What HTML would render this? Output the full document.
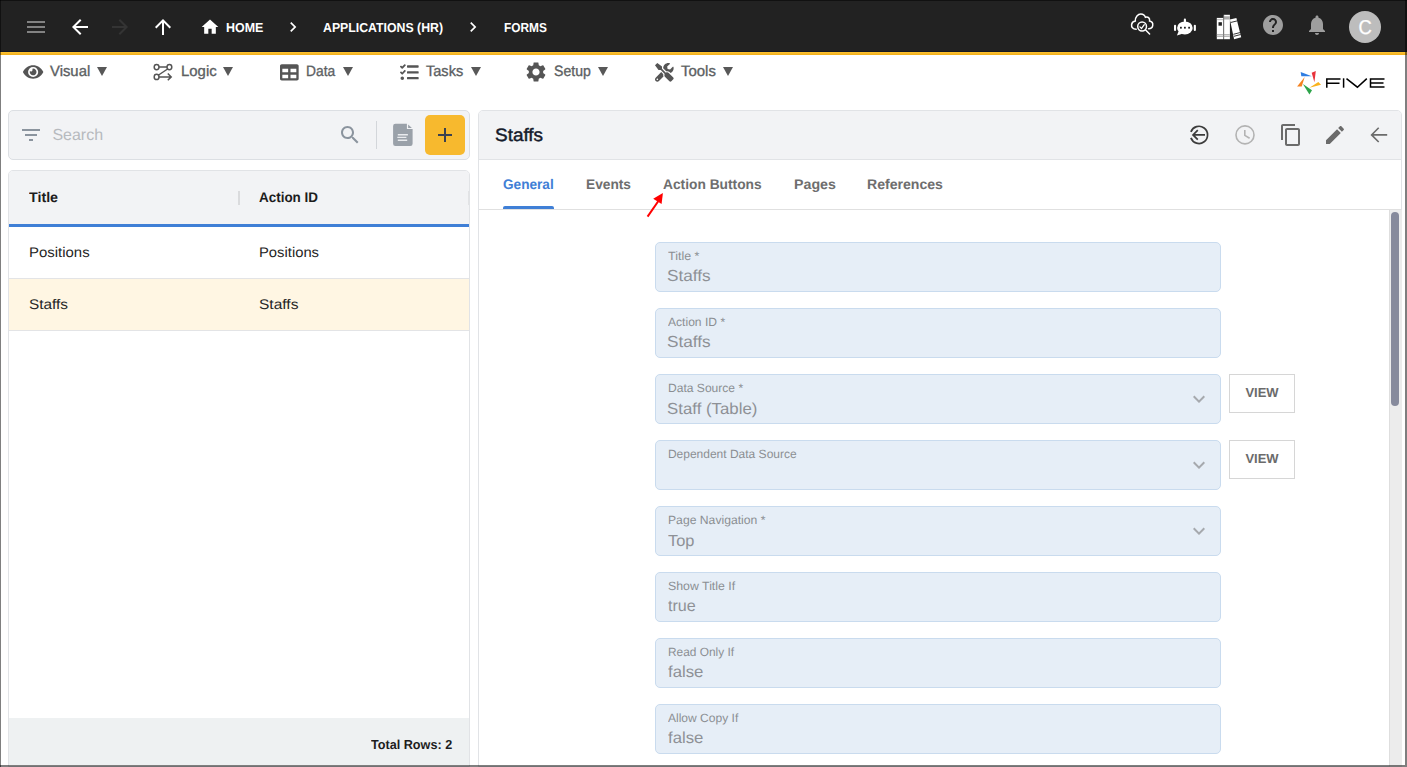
<!DOCTYPE html>
<html>
<head>
<meta charset="utf-8">
<title>Five - Forms</title>
<style>
*{box-sizing:border-box;margin:0;padding:0}
html,body{width:1407px;height:767px;overflow:hidden;background:#fff}
body{font-family:"Liberation Sans",sans-serif;position:relative;color:#222;text-rendering:geometricPrecision}
.abs{position:absolute}
svg{display:block;position:absolute;overflow:visible}
#frameL{left:0;top:0;width:1px;height:767px;background:rgba(0,0,0,0.5);z-index:50}
#frameR{left:1405px;top:0;width:2px;height:765px;background:rgba(0,0,0,0.5);z-index:50}
#frameB{left:0;top:765px;width:1407px;height:2px;background:rgba(0,0,0,0.5);z-index:50}
#topbar{left:0;top:0;width:1407px;height:52px;background:#222222;border-top:1px solid #111;border-bottom:1px solid #141824}
#yellow{left:0;top:52px;width:1407px;height:3px;background:linear-gradient(#fcc02e 0,#fcc02e 33%,#f5b829 33%,#f5b829 67%,#f3b11c 67%)}
.crumb{color:#fff;font-size:13px;font-weight:bold;top:20px;line-height:15px;white-space:nowrap}
#avatar{left:1349px;top:11px;width:32px;height:32px;border-radius:16px;background:#bdbdbd;color:#fff;font-size:20px;line-height:34px;text-align:center;-webkit-text-stroke:0.300px #fff}
#avatar span{display:inline-block;transform:scaleX(0.920)}
.menu{top:63px;font-size:15px;line-height:18px;color:#5c5f63;white-space:nowrap;-webkit-text-stroke:0.350px #5c5f63}
.tri{top:66.500px;width:0;height:0;border-left:5px solid transparent;border-right:5px solid transparent;border-top:9.500px solid #585858}
#search{left:8px;top:110px;width:462px;height:50px;background:#f2f3f5;border:1px solid #dcdfe3;border-radius:5px}
#stext{left:52.400px;top:127px;font-size:16px;line-height:18px;color:#b7babe;white-space:nowrap}
#plus{left:425px;top:115px;width:40px;height:40px;border-radius:5px;background:#f7b92e}
#list{left:8px;top:170px;width:462px;height:597px;background:#fff;border:1px solid #e1e3e6;border-radius:5px 5px 0 0}
#lhead{left:9px;top:171px;width:460px;height:53px;background:#f2f3f5;border-radius:4px 4px 0 0}
#lblue{left:9px;top:224px;width:460px;height:3px;background:#3f7fd6}
.cell{font-size:14px;line-height:16px;color:#252525;white-space:nowrap}
.hcell{top:189px;font-size:14px;line-height:16px;color:#1c1c1c;font-weight:bold;white-space:nowrap}
#rowsel{left:9px;top:279px;width:460px;height:51px;background:#fff6e3}
.rline{left:9px;width:460px;height:1px;background:#e3e4e6}
#lfoot{left:9px;top:718px;width:460px;height:47px;background:#eef1f2}
#total{left:371.600px;top:737px;font-size:13px;line-height:15px;font-weight:bold;color:#1d1d1d;white-space:nowrap}
#rp{left:478px;top:110px;width:924px;height:657px;background:#fff;border:1px solid #e1e3e6;border-radius:5px 5px 0 0}
#rphead{left:479px;top:111px;width:922px;height:49px;background:#f2f3f5;border-bottom:1px solid #e1e3e6;border-radius:4px 4px 0 0}
#rptitle{left:495.300px;top:124px;font-size:18px;line-height:22px;font-weight:normal;color:#151b2b;white-space:nowrap;-webkit-text-stroke:0.450px #151b2b}
.tab{top:176px;font-size:14px;line-height:16px;font-weight:bold;color:#6e6e6e;white-space:nowrap}
#tabline{left:479px;top:209px;width:922px;height:1px;background:#e0e0e0}
#tabsel{left:503px;top:206px;width:51px;height:3px;background:#3f7fd6;border-radius:2px 2px 0 0}
.fld{left:655px;width:566px;height:50px;background:#e6eef7;border:1px solid #c9dbee;border-radius:5px}
.fl{left:668.400px;font-size:12px;line-height:14px;color:#8b8e93;white-space:nowrap}
.fv{left:667.800px;font-size:16px;line-height:18px;color:#8e9196;white-space:nowrap}
.view{left:1229px;width:66px;height:39px;border:1px solid #d6d6d6;background:#fff;font-size:13px;font-weight:bold;color:#6b6b6b;text-align:center;line-height:35px}
#sbtrack{left:1389px;top:210px;width:13px;height:557px;background:#ececec;border-left:1px solid #dedede}
#sbthumb{left:1391px;top:212px;width:8px;height:194px;background:#868a9c;border-radius:4px}
#m1{margin-left:-0.7px}
#m2{margin-left:-1.2px}
#h1{margin-left:-0.7px}
#r1a{margin-left:-0.3px}
#r1b{margin-left:-0.3px}
#r2a{margin-left:-0.3px}
#r2b{margin-left:-0.3px}
#t1{margin-left:-1.0px}
#t3{margin-left:-0.7px}
#t4{margin-left:-1.2px}
#c2{margin-left:-0.7px}
#total{margin-left:-0.4px}
#fv0{margin-left:-0.5px}
#fv1{margin-left:-0.5px}
#fl2{margin-left:-0.5px}
#fv2{margin-left:-0.5px}
#fl3{margin-left:-0.5px}
#fl4{margin-left:-0.5px}
#fl6{margin-left:-0.5px}
#c1{transform:scaleX(0.9590);transform-origin:0 0}
#c2{transform:scaleX(0.9464);transform-origin:0 0}
#c3{transform:scaleX(0.9149);transform-origin:0 0}
#m0{transform:scaleX(0.9906);transform-origin:0 0}
#m1{transform:scaleX(0.9945);transform-origin:0 0}
#m2{transform:scaleX(0.9193);transform-origin:0 0}
#m3{transform:scaleX(0.9699);transform-origin:0 0}
#m4{transform:scaleX(0.9386);transform-origin:0 0}
#m5{transform:scaleX(0.9961);transform-origin:0 0}
#h1{transform:scaleX(1.0169);transform-origin:0 0}
#h2{transform:scaleX(0.9606);transform-origin:0 0}
#r1a{transform:scaleX(1.0677);transform-origin:0 0}
#r1b{transform:scaleX(1.0565);transform-origin:0 0}
#r2a{transform:scaleX(1.0967);transform-origin:0 0}
#r2b{transform:scaleX(1.1084);transform-origin:0 0}
#total{transform:scaleX(0.9715);transform-origin:0 0}
#rptitle{transform:scaleX(1.0524);transform-origin:0 0}
#t0{transform:scaleX(0.9731);transform-origin:0 0}
#t1{transform:scaleX(0.9795);transform-origin:0 0}
#t2{transform:scaleX(0.9835);transform-origin:0 0}
#t3{transform:scaleX(1.0151);transform-origin:0 0}
#t4{transform:scaleX(1.0056);transform-origin:0 0}
#fl0{transform:scaleX(1.0400);transform-origin:0 0}
#fv0{transform:scaleX(1.0751);transform-origin:0 0}
#fl1{transform:scaleX(1.0071);transform-origin:0 0}
#fv1{transform:scaleX(1.0751);transform-origin:0 0}
#fl2{transform:scaleX(1.0054);transform-origin:0 0}
#fv2{transform:scaleX(1.0518);transform-origin:0 0}
#fl4{transform:scaleX(1.0147);transform-origin:0 0}
#fv4{transform:scaleX(1.0247);transform-origin:0 0}
#fl5{transform:scaleX(1.0277);transform-origin:0 0}
#fv5{transform:scaleX(1.0076);transform-origin:0 0}
#fl6{transform:scaleX(0.9910);transform-origin:0 0}
#fv6{transform:scaleX(1.0485);transform-origin:0 0}
#fl7{transform:scaleX(1.0029);transform-origin:0 0}
#fv7{transform:scaleX(1.0485);transform-origin:0 0}
</style>
</head>
<body>
<div id="topbar" class="abs"></div>
<div id="yellow" class="abs"></div>
<svg style="left:24px;top:15px" width="24" height="24" viewBox="0 0 24 24" ><path fill="#828282" d="M3 18h18v-2H3v2zm0-5h18v-2H3v2zm0-7v2h18V6H3z"/></svg>
<svg style="left:68px;top:15px" width="24" height="24" viewBox="0 0 24 24" ><path fill="#fff" d="M20 11H7.83l5.59-5.59L12 4l-8 8 8 8 1.41-1.41L7.83 13H20v-2z"/></svg>
<svg style="left:108px;top:15px" width="24" height="24" viewBox="0 0 24 24" ><path fill="#343434" d="M12 4l-1.41 1.41L16.17 11H4v2h12.17l-5.58 5.59L12 20l8-8z"/></svg>
<svg style="left:151px;top:15px" width="24" height="24" viewBox="0 0 24 24" ><path fill="#fff" d="M4 12l1.41 1.41L11 7.83V20h2V7.83l5.58 5.59L20 12l-8-8-8 8z"/></svg>
<svg style="left:200px;top:17px" width="20" height="20" viewBox="0 0 24 24" ><path fill="#fff" d="M10 20v-6h4v6h5v-8h3L12 3 2 12h3v8z"/></svg>
<div class="abs crumb" id="c1" style="left:226px">HOME</div>
<svg style="left:283px;top:17px" width="20" height="20" viewBox="0 0 24 24" ><path fill="#fff" d="M10 6L8.59 7.41 13.17 12l-4.58 4.59L10 18l6-6z"/></svg>
<div class="abs crumb" id="c2" style="left:323.500px">APPLICATIONS (HR)</div>
<svg style="left:463px;top:17px" width="20" height="20" viewBox="0 0 24 24" ><path fill="#fff" d="M10 6L8.59 7.41 13.17 12l-4.58 4.59L10 18l6-6z"/></svg>
<div class="abs crumb" id="c3" style="left:503.500px">FORMS</div>
<svg style="left:1128px;top:10px" width="28" height="28" viewBox="1128 10 28 28" fill="none" stroke="#fff" stroke-width="1.500" stroke-linecap="round"><path d="M1136.200 29.300C1132.600 29.300 1131.300 26.800 1131.600 24.600C1131.900 22.500 1133.400 21.200 1135.300 21C1135.100 16.800 1138 14 1140.800 14C1143.400 14 1144.900 15.700 1145.400 17.300C1147.800 16.300 1150.100 18 1149.600 21.100C1152.200 21.600 1153 23.800 1152.700 25.600C1152.400 27.500 1150.900 28.700 1148.600 28.700"/><circle cx="1142.100" cy="26.500" r="4.400"/><path d="M1145.400 29.800L1149.600 34"/><path d="M1139.900 26.900L1141.500 28.500L1144.300 24.700" stroke-width="1.300"/></svg>
<svg style="left:1172px;top:16px" width="26" height="22" viewBox="1172 16 26 22"><g fill="#fff"><ellipse cx="1184.900" cy="27.900" rx="7.800" ry="6.500"/><path d="M1178.600 31.300L1176.900 35.400L1182.500 33.800z"/><rect x="1183.800" y="18.600" width="2.200" height="4" rx="1.100"/><rect x="1174" y="24.700" width="2.100" height="6.400" rx="1.050"/><rect x="1193.800" y="24.700" width="2.100" height="6.400" rx="1.050"/></g><g fill="#222"><rect x="1180" y="26.800" width="1.800" height="1.800"/><rect x="1184" y="26.800" width="1.800" height="1.800"/><rect x="1188.200" y="26.800" width="1.800" height="1.800"/></g></svg>
<svg style="left:1215px;top:13px" width="28" height="28" viewBox="1215 13 28 28"><rect x="1216.800" y="17.900" width="6.500" height="21.300" fill="#fff"/><rect x="1216.800" y="19.500" width="6.500" height="0.600" fill="#888"/><rect x="1218.500" y="22.200" width="3.400" height="3.500" fill="#222"/><rect x="1216.800" y="34.300" width="6.500" height="0.900" fill="#999"/><rect x="1216.800" y="35.800" width="6.500" height="0.900" fill="#999"/><rect x="1223.900" y="14.800" width="6" height="24.400" fill="#fff"/><rect x="1223.900" y="16.300" width="6" height="3.200" fill="#aaa"/><rect x="1223.900" y="34.300" width="6" height="0.900" fill="#999"/><rect x="1223.900" y="35.800" width="6" height="0.900" fill="#999"/><rect x="1223.600" y="14.800" width="0.600" height="24.400" fill="#888"/><path fill="#fff" d="M1229.900 19.400L1236.400 17.900L1241.200 37.300L1234.100 39.200z"/><path stroke="#222" stroke-width="0.900" fill="none" d="M1230.600 22.500L1237.200 20.900M1233.400 34.300L1240.300 32.500M1233.900 36.300L1240.700 34.500"/></svg>
<svg style="left:1261px;top:13px" width="24" height="24" viewBox="0 0 24 24" ><path fill="#9e9e9e" d="M12 2C6.48 2 2 6.48 2 12s4.48 10 10 10 10-4.48 10-10S17.52 2 12 2zm1 17h-2v-2h2v2zm2.070-7.750l-.9.920C13.450 12.900 13 13.500 13 15h-2v-.5c0-1.100.45-2.100 1.170-2.830l1.240-1.260c.37-.36.590-.86.590-1.410 0-1.100-.9-2-2-2s-2 .9-2 2H8c0-2.210 1.790-4 4-4s4 1.790 4 4c0 .88-.36 1.680-.930 2.250z"/></svg>
<svg style="left:1305px;top:13px" width="24" height="24" viewBox="0 0 24 24" ><path fill="#9e9e9e" d="M12 22c1.100 0 2-.9 2-2h-4c0 1.100.89 2 2 2zm6-6v-5c0-3.070-1.640-5.640-4.500-6.320V4c0-.83-.67-1.500-1.500-1.500s-1.500.67-1.500 1.500v.68C7.630 5.360 6 7.920 6 11v5l-2 2v1h16v-1l-2-2z"/></svg>
<div class="abs" id="avatar"><span>C</span></div>
<svg style="left:22.85px;top:62.85px" width="20.25" height="18" viewBox="0 0 576 512" ><path fill="#555" d="M572.52 241.4C518.29 135.59 410.93 64 288 64S57.68 135.64 3.48 241.41a32.35 32.35 0 0 0 0 29.19C57.71 376.41 165.07 448 288 448s230.32-71.64 284.52-177.41a32.35 32.35 0 0 0 0-29.19zM288 400a144 144 0 1 1 144-144 143.93 143.93 0 0 1-144 144zm0-240a95.31 95.31 0 0 0-25.31 3.79 47.85 47.85 0 0 1-66.9 66.9A95.78 95.78 0 1 0 288 160z"/></svg>
<svg style="left:152px;top:62px" width="22" height="20" viewBox="152 62 22 20" fill="none" stroke="#555" stroke-width="1.500"><ellipse cx="156.600" cy="67.100" rx="2.400" ry="2.700"/><ellipse cx="169.400" cy="67.100" rx="2.400" ry="2.700"/><ellipse cx="156.600" cy="76.900" rx="2.400" ry="2.700"/><path d="M159 67.100H167M167.600 69L158.600 75M159 76.900H171.200M167.800 73.500L171.200 76.900L167.800 80.300"/></svg>
<svg style="left:279.7px;top:62.6px" width="18.67" height="18.67" viewBox="0 0 512 512" ><path fill="#555" d="M464 32H48C21.49 32 0 53.49 0 80v352c0 26.51 21.49 48 48 48h416c26.51 0 48-21.49 48-48V80c0-26.51-21.49-48-48-48zM224 416H64v-96h160v96zm0-160H64v-96h160v96zm224 160H288v-96h160v96zm0-160H288v-96h160v96z"/></svg>
<svg style="left:399.8px;top:62.6px" width="18.67" height="18.67" viewBox="0 0 512 512" ><path fill="#555" d="M139.61 35.5a12 12 0 0 0-17 0L58.93 98.81l-22.7-22.12a12 12 0 0 0-17 0L3.53 92.41a12 12 0 0 0 0 17l47.59 47.4a12.78 12.78 0 0 0 17.61 0l15.59-15.62L156.52 69a12.09 12.09 0 0 0 .09-17zm0 159.19a12 12 0 0 0-17 0l-63.68 63.72-22.7-22.1a12 12 0 0 0-17 0L3.53 252a12 12 0 0 0 0 17L51 316.5a12.77 12.77 0 0 0 17.6 0l15.7-15.69 72.2-72.22a12 12 0 0 0 .09-16.9zM64 368c-26.49 0-48.59 21.5-48.59 48S37.53 464 64 464a48 48 0 0 0 0-96zm432 16H208a16 16 0 0 0-16 16v32a16 16 0 0 0 16 16h288a16 16 0 0 0 16-16v-32a16 16 0 0 0-16-16zm0-320H208a16 16 0 0 0-16 16v32a16 16 0 0 0 16 16h288a16 16 0 0 0 16-16V80a16 16 0 0 0-16-16zm0 160H208a16 16 0 0 0-16 16v32a16 16 0 0 0 16 16h288a16 16 0 0 0 16-16v-32a16 16 0 0 0-16-16z"/></svg>
<svg style="left:524.1px;top:60px" width="24" height="24" viewBox="0 0 24 24" ><path fill="#555" d="M19.14 12.94c.04-.3.06-.61.06-.94 0-.32-.02-.64-.07-.94l2.03-1.58c.18-.14.23-.41.12-.61l-1.92-3.32c-.12-.22-.37-.29-.59-.22l-2.39.96c-.5-.38-1.03-.7-1.62-.94l-.36-2.54c-.04-.24-.24-.41-.48-.41h-3.84c-.24 0-.43.17-.47.41l-.36 2.54c-.59.24-1.13.57-1.62.94l-2.39-.96c-.22-.08-.47 0-.59.22L2.74 8.87c-.12.21-.08.47.12.61l2.03 1.58c-.05.3-.09.63-.09.94s.02.64.07.94l-2.03 1.58c-.18.14-.23.41-.12.61l1.92 3.32c.12.22.37.29.59.22l2.39-.96c.5.38 1.03.7 1.62.94l.36 2.54c.05.24.24.41.48.41h3.84c.24 0 .44-.17.47-.41l.36-2.54c.59-.24 1.13-.56 1.62-.94l2.39.96c.22.08.47 0 .59-.22l1.92-3.32c.12-.22.07-.47-.12-.61l-2.01-1.58zM12 15.6c-1.98 0-3.6-1.62-3.6-3.6s1.620-3.6 3.600-3.600 3.600 1.620 3.600 3.600-1.620 3.600-3.600 3.600z"/></svg>
<svg style="left:654.9px;top:62.6px" width="18.67" height="18.67" viewBox="0 0 512 512" ><path fill="#555" d="M501.1 395.7L384 278.600c-23.100-23.100-57.600-27.600-85.400-13.900L192 158.100V96L64 0 0 64l96 128h62.100l106.600 106.600c-13.600 27.800-9.200 62.300 13.900 85.400l117.100 117.100c14.600 14.600 38.200 14.600 52.700 0l52.700-52.700c14.500-14.600 14.500-38.200 0-52.700zM331.700 225c28.300 0 54.900 11 74.900 31l19.400 19.400c15.800-6.900 30.800-16.500 43.800-29.500 37.100-37.100 49.700-89.300 37.900-136.700-2.200-9-13.500-12.100-20.100-5.500l-74.400 74.400-67.900-11.300L334 98.900l74.400-74.400c6.600-6.600 3.400-17.900-5.700-20.200-47.400-11.700-99.600.9-136.600 37.900-28.500 28.500-41.900 66.100-41.200 103.600l82.100 82.100c8.100-1.900 16.500-2.900 24.700-2.900zm-103.900 82l-56.700-56.700L18.700 402.800c-25 25-25 65.500 0 90.500s65.500 25 90.500 0l123.600-123.600c-7.600-19.900-9.900-41.600-5-62.700zM64 472c-13.200 0-24-10.800-24-24 0-13.300 10.700-24 24-24s24 10.700 24 24c0 13.200-10.700 24-24 24z"/></svg>
<div class="abs menu" id="m0" style="left:50.4px">Visual</div>
<div class="abs tri" style="left:96.9px"></div>
<div class="abs menu" id="m1" style="left:181.3px">Logic</div>
<div class="abs tri" style="left:222.7px"></div>
<div class="abs menu" id="m2" style="left:306.8px">Data</div>
<div class="abs tri" style="left:342.8px"></div>
<div class="abs menu" id="m3" style="left:426.3px">Tasks</div>
<div class="abs tri" style="left:470.5px"></div>
<div class="abs menu" id="m4" style="left:553.9px">Setup</div>
<div class="abs tri" style="left:597.7px"></div>
<div class="abs menu" id="m5" style="left:681.4px">Tools</div>
<div class="abs tri" style="left:722.9px"></div>
<svg style="left:1296px;top:68px" width="92" height="30" viewBox="1296 68 92 30"><path fill="#2f7de1" d="M1300.700 71.900L1311.800 76.300 1301.300 76.300z"/><path fill="#e8333c" d="M1315.800 70.900L1311.700 72.800 1314.400 82.200z"/><path fill="#f9b21d" d="M1318.400 82L1321 84.700 1309.400 87.700z"/><path fill="#2da44a" d="M1302.900 84.100L1312 90.300 1309.400 94.500z"/><path fill="#f58220" d="M1304.700 77.100L1297.100 86.400 1301.700 86.400z"/><g fill="none" stroke="#000" stroke-width="1.500"><path d="M1326.800 87.700V79H1340.500M1326.800 83.200H1339.500"/><path d="M1343.600 78.300V87.700"/><path d="M1346.500 78.600L1357.400 87.200 1366.800 78.600"/><path d="M1384.500 79H1370.500V87H1384.500M1370.500 83H1383.500"/></g></svg>
<div id="search" class="abs"></div>
<svg style="left:19px;top:123px" width="24" height="24" viewBox="0 0 24 24" ><path fill="#8b949e" d="M10 18h4v-2h-4v2zM3 6v2h18V6H3zm3 7h12v-2H6v2z"/></svg>
<div class="abs" id="stext">Search</div>
<svg style="left:338px;top:123px" width="24" height="24" viewBox="0 0 24 24" ><path fill="#8b949e" d="M15.5 14h-.79l-.28-.27C15.410 12.590 16 11.110 16 9.500 16 5.910 13.090 3 9.500 3S3 5.910 3 9.500 5.910 16 9.500 16c1.610 0 3.090-.59 4.230-1.570l.27.28v.79l5 4.990L20.490 19l-4.990-5zm-6 0C7.010 14 5 11.990 5 9.500S7.010 5 9.500 5 14 7.010 14 9.500 11.990 14 9.500 14z"/></svg>
<div class="abs" style="left:376px;top:121px;width:1px;height:28px;background:#d3d6da"></div>
<svg style="left:393px;top:123px" width="20" height="24" viewBox="393 123 20 24"><path fill="#9aa1a9" d="M395.500 123.800H406.900V129.100H412.600V143.700Q412.600 146 410.300 146H395.400Q393.100 146 393.100 143.700V126.100Q393.100 123.800 395.500 123.800z"/><path fill="#9aa1a9" d="M408.100 124.400V127.900H411.900z"/><path fill="#e9ebee" d="M397.800 134.100H407.900V135.500H397.800zM397.300 136.800H406.400V138.100H397.300zM397.800 139.500H407.200V140.900H397.800z"/></svg>
<div class="abs" id="plus"></div>
<svg style="left:433px;top:123px" width="24" height="24" viewBox="0 0 24 24" ><path fill="#3a4150" d="M19 13h-6v6h-2v-6H5v-2h6V5h2v6h6v2z"/></svg>
<div id="list" class="abs"></div>
<div id="lhead" class="abs"></div>
<div id="lblue" class="abs"></div>
<div class="abs hcell" id="h1" style="left:30px">Title</div>
<div class="abs hcell" id="h2" style="left:259px">Action ID</div>
<div class="abs" style="left:238px;top:191px;width:2px;height:14px;background:#dadbdd"></div>
<div class="abs" style="left:468px;top:191px;width:1px;height:14px;background:#e2e3e5"></div>
<div class="abs cell" id="r1a" style="left:29px;top:244px">Positions</div>
<div class="abs cell" id="r1b" style="left:259px;top:244px">Positions</div>
<div class="abs rline" style="top:278px"></div>
<div id="rowsel" class="abs"></div>
<div class="abs rline" style="top:330px"></div>
<div class="abs cell" id="r2a" style="left:29px;top:296px">Staffs</div>
<div class="abs cell" id="r2b" style="left:259px;top:296px">Staffs</div>
<div id="lfoot" class="abs"></div>
<div class="abs" id="total">Total Rows: 2</div>
<div id="rp" class="abs"></div>
<div id="rphead" class="abs"></div>
<div id="rptitle" class="abs">Staffs</div>
<svg style="left:1187px;top:123px" width="24" height="24" viewBox="1187 123 24 24" fill="none" stroke="#3c3c3c" stroke-width="1.700"><path d="M1190.900 131.900A8.600 8.600 0 1 1 1190.900 137.900"/><path d="M1205 134.900H1193M1197.800 130.100L1193 134.900L1197.800 139.700"/></svg>
<svg style="left:1233px;top:123px" width="24" height="24" viewBox="1233 123 24 24" fill="none" stroke="#b3b3b3" stroke-width="1.600"><circle cx="1245" cy="134.900" r="9"/><path d="M1244.800 130V135.400L1249.600 138.300"/></svg>
<svg style="left:1367px;top:123px" width="24" height="24" viewBox="1367 123 24 24" fill="none" stroke="#6b6b6b" stroke-width="1.600"><path d="M1387.200 134.900H1372M1378.700 127.800L1371.600 134.900L1378.700 142"/></svg>
<svg style="left:1279px;top:123px" width="24" height="24" viewBox="0 0 24 24" ><path fill="#6b6b6b" d="M16 1H4c-1.100 0-2 .9-2 2v14h2V3h12V1zm3 4H8c-1.100 0-2 .9-2 2v14c0 1.100.9 2 2 2h11c1.100 0 2-.9 2-2V7c0-1.100-.9-2-2-2zm0 16H8V7h11v14z"/></svg>
<svg style="left:1323px;top:123px" width="24" height="24" viewBox="0 0 24 24" ><path fill="#6b6b6b" d="M3 17.250V21h3.750L17.810 9.940l-3.750-3.750L3 17.250zM20.710 7.040c.39-.39.39-1.020 0-1.410l-2.340-2.340c-.39-.39-1.020-.39-1.410 0l-1.830 1.830 3.750 3.750 1.830-1.830z"/></svg>
<div class="abs tab" id="t0" style="left:503.3px;color:#3f7fd6">General</div>
<div class="abs tab" id="t1" style="left:586.9px;">Events</div>
<div class="abs tab" id="t2" style="left:663.4px;">Action Buttons</div>
<div class="abs tab" id="t3" style="left:794.3px;">Pages</div>
<div class="abs tab" id="t4" style="left:867.7px;">References</div>
<div id="tabline" class="abs"></div>
<div id="tabsel" class="abs"></div>
<svg style="left:640px;top:188px" width="30" height="34" viewBox="640 188 30 34"><path d="M647.6 216.600L658.200 201.300" stroke="#f00" stroke-width="2" fill="none"/><path fill="#f00" d="M662.900 193L653.200 198.700 661.600 203.900z"/></svg>
<div class="abs fld" style="top:242px"></div>
<div class="abs fl" id="fl0" style="top:248.5px">Title *</div>
<div class="abs fv" id="fv0" style="top:267.5px">Staffs</div>
<div class="abs fld" style="top:308px"></div>
<div class="abs fl" id="fl1" style="top:314.5px">Action ID *</div>
<div class="abs fv" id="fv1" style="top:333.5px">Staffs</div>
<div class="abs fld" style="top:374px"></div>
<div class="abs fl" id="fl2" style="top:380.5px">Data Source *</div>
<div class="abs fv" id="fv2" style="top:400.5px">Staff (Table)</div>
<svg style="left:1187px;top:387px" width="24" height="24" viewBox="0 0 24 24" ><path fill="#a6a9ae" d="M16.590 8.590L12 13.170 7.410 8.590 6 10l6 6 6-6z"/></svg>
<div class="abs fld" style="top:440px"></div>
<div class="abs fl" id="fl3" style="top:446.5px">Dependent Data Source</div>
<svg style="left:1187px;top:453px" width="24" height="24" viewBox="0 0 24 24" ><path fill="#a6a9ae" d="M16.590 8.590L12 13.170 7.410 8.590 6 10l6 6 6-6z"/></svg>
<div class="abs fld" style="top:506px"></div>
<div class="abs fl" id="fl4" style="top:512.5px">Page Navigation *</div>
<div class="abs fv" id="fv4" style="top:532.5px">Top</div>
<svg style="left:1187px;top:519px" width="24" height="24" viewBox="0 0 24 24" ><path fill="#a6a9ae" d="M16.590 8.590L12 13.170 7.410 8.590 6 10l6 6 6-6z"/></svg>
<div class="abs fld" style="top:572px"></div>
<div class="abs fl" id="fl5" style="top:578.5px">Show Title If</div>
<div class="abs fv" id="fv5" style="top:597.5px">true</div>
<div class="abs fld" style="top:638px"></div>
<div class="abs fl" id="fl6" style="top:644.5px">Read Only If</div>
<div class="abs fv" id="fv6" style="top:663.5px">false</div>
<div class="abs fld" style="top:704px"></div>
<div class="abs fl" id="fl7" style="top:710.5px">Allow Copy If</div>
<div class="abs fv" id="fv7" style="top:729.5px">false</div>
<div class="abs view" style="top:374px"><span id="v1">VIEW</span></div>
<div class="abs view" style="top:440px"><span id="v2">VIEW</span></div>
<div id="sbtrack" class="abs"></div>
<div id="sbthumb" class="abs"></div>
<div id="frameL" class="abs"></div>
<div id="frameR" class="abs"></div>
<div id="frameB" class="abs"></div>
</body>
</html>
